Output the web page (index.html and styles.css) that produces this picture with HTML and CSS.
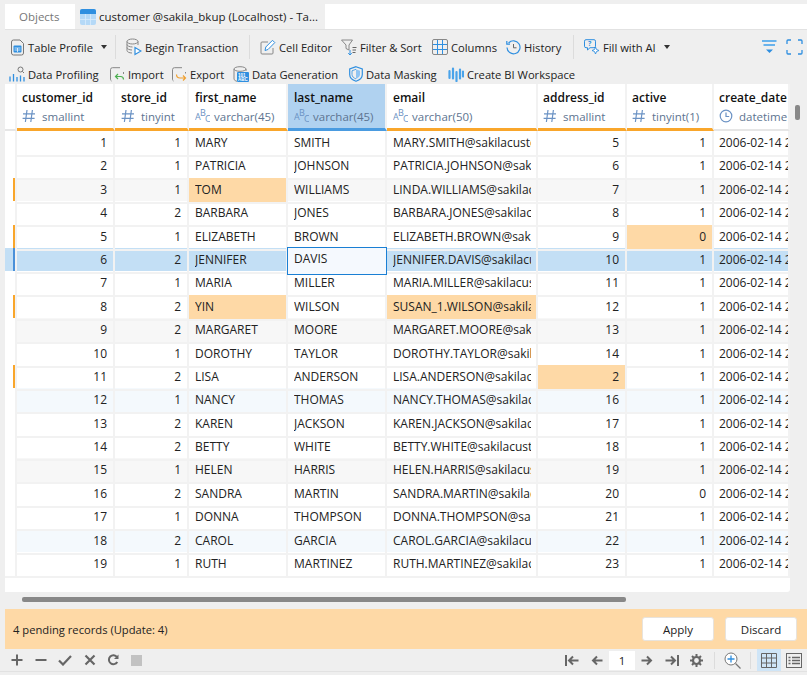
FILE: index.html
```html
<!DOCTYPE html>
<html lang="en">
<head>
    <meta charset="UTF-8">
    <title>customer @sakila_bkup (Localhost) - Table</title>
    <link rel="stylesheet" href="styles.css">
</head>
<body>

<svg class="defs" width="0" height="0">
    <symbol id="i-hash" viewBox="0 0 14 14"><path d="M5 1 3.400 13M10.400 1 8.800 13M1 4.800h12M.6 9.400h12" fill="none" stroke="#6b92c4" stroke-width="1.200"/></symbol>
    <symbol id="i-abc" viewBox="0 0 15 14"><text x="0" y="11" class="abc">A</text><text x="5" y="7" class="abc">B</text><text x="10" y="13" class="abc">C</text></symbol>
    <symbol id="i-clock" viewBox="0 0 14 14"><circle cx="7" cy="7" r="5.800" fill="none" stroke="#6b92c4" stroke-width="1.200"/><path d="M7 3.500V7.500H10.200" fill="none" stroke="#6b92c4" stroke-width="1.200"/></symbol>
</svg>

<div class="tabs">
    <div class="tab tab-objects">Objects</div>
    <div class="tab tab-active">
        <svg class="tab-icon" width="16" height="16" viewBox="0 0 16 16"><rect width="16" height="16" rx="2" fill="#b5d9f7"/><path d="M0 2a2 2 0 0 1 2-2h12a2 2 0 0 1 2 2v3H0z" fill="#2f8fe0"/><path d="M5.500 5v11M10.500 5v11M0 10.500h16" stroke="#d8ecfc" stroke-width=".8"/></svg>
        customer @sakila_bkup (Localhost) - Ta...
    </div>
    <div class="tab-rest"></div>
</div>

<div class="toolbar">
    <div class="tool-row">
        <div class="tool w-profile">
            <svg width="15" height="17" viewBox="0 0 15 17"><path d="M1.500 3A2 2 0 0 1 3.500 1H10l3.500 3.500V14a2 2 0 0 1-2 2h-8a2 2 0 0 1-2-2z" fill="none" stroke="#777"/><rect x="3.500" y="6.500" width="8" height="7" rx="1" fill="#2f8fe0"/><path d="M4.500 9h6M4.500 11h6M7.500 9v4" stroke="#fff" stroke-width=".7"/></svg>
            <span>Table Profile</span><i class="caret"></i>
        </div>
        <b class="sep"></b>
        <div class="tool w-begin">
            <svg width="16" height="18" viewBox="0 0 16 18"><g fill="none" stroke="#888"><ellipse cx="6.500" cy="3.500" rx="5.500" ry="2.500"/><path d="M1 3.500v9c0 1.300 2.200 2.500 5 2.500M12 3.500V7M1 6.500c0 1.300 2.500 2.500 5.500 2.500M1 9.500c0 1.300 2.200 2.500 5 2.500"/></g><path d="M9 9.500v7l6-3.500z" fill="#fff" stroke="#2f8fe0" stroke-width="1.200"/></svg>
            <span>Begin Transaction</span>
        </div>
        <b class="sep"></b>
        <div class="tool w-cell">
            <svg width="16" height="16" viewBox="0 0 16 16"><path d="M8 3H2a1 1 0 0 0-1 1v10a1 1 0 0 0 1 1h10a1 1 0 0 0 1-1V9" fill="none" stroke="#888"/><path d="M5 11.500 5.800 8 12.500 1.300l2.300 2.300L8 10.500z" fill="#fff" stroke="#2f8fe0"/></svg>
            <span>Cell Editor</span>
        </div>
        <div class="tool w-filter">
            <svg width="16" height="17" viewBox="0 0 16 17"><path d="M.5 1h11L8 6v5L5 9.500V6z" fill="none" stroke="#888"/><path d="M9 11v5M7.200 14.200 9 16l1.800-1.800" fill="none" stroke="#2f8fe0"/><path d="M11.500 8.500h4M11.500 11h3.500M11.500 13.500h3" stroke="#666"/></svg>
            <span>Filter &amp; Sort</span>
        </div>
        <div class="tool w-cols">
            <svg width="16" height="16" viewBox="0 0 16 16"><rect x=".5" y=".5" width="15" height="15" rx="1.500" fill="none" stroke="#888"/><path d="M5.500 1v14M10.500 1v14M1 5.500h14M1 10.500h14" stroke="#2f8fe0"/></svg>
            <span>Columns</span>
        </div>
        <div class="tool w-hist">
            <svg width="15" height="15" viewBox="0 0 15 15"><path d="M2.600 3A6.500 6.500 0 1 1 1 7.500" fill="none" stroke="#2f8fe0" stroke-width="1.200"/><path d="M.8 1v3.200H4" fill="none" stroke="#2f8fe0" stroke-width="1.200"/><path d="M7.500 4v3.800h3" fill="none" stroke="#666"/></svg>
            <span>History</span>
        </div>
        <b class="sep"></b>
        <div class="tool w-fill">
            <svg width="16" height="16" viewBox="0 0 16 16"><path d="M2 .7h8a1.500 1.500 0 0 1 1.500 1.500v5A1.500 1.500 0 0 1 10 8.700H6L3.500 11V8.700H2A1.500 1.500 0 0 1 .5 7.200v-5A1.500 1.500 0 0 1 2 .7z" fill="none" stroke="#2f8fe0"/><text x="4" y="7" class="ask">?</text><path d="M11.500 8l1 2.500 2.500 1-2.500 1-1 2.500-1-2.500-2.500-1 2.500-1z" fill="#fff" stroke="#2f8fe0" stroke-width=".9"/></svg>
            <span>Fill with AI</span><i class="caret"></i>
        </div>
        <div class="tool-end">
            <svg width="15" height="15" viewBox="0 0 15 15"><path d="M0 1h14.500M1.500 5h11.500" stroke="#3ea0ec" stroke-width="1.300"/><path d="M4 9.500h7L7.500 13z" fill="#2f8fe0"/></svg>
            <svg width="17" height="16" viewBox="0 0 17 16"><path d="M1 5V2a1 1 0 0 1 1-1h3M12 1h3a1 1 0 0 1 1 1v3M16 11v3a1 1 0 0 1-1 1h-3M5 15H2a1 1 0 0 1-1-1v-3" fill="none" stroke="#2f8fe0" stroke-width="1.300"/></svg>
        </div>
    </div>
    <div class="tool-row tool-row2">
        <div class="tool w-prof">
            <svg width="16" height="16" viewBox="0 0 16 16"><path d="M1 10.500v5M4.500 8v7.500M8 11v4.500M11.500 9.500v6M15 11v4.500" stroke="#2f8fe0" stroke-width="1.300" fill="none"/><circle cx="11.500" cy="3.500" r="2.500" fill="none" stroke="#777"/><path d="m13.300 5.300 1.700 1.700" stroke="#777"/></svg>
            <span>Data Profiling</span>
        </div>
        <div class="tool w-imp">
            <svg width="15" height="15" viewBox="0 0 15 15"><path d="M10 .7H2.500a2 2 0 0 0-2 2v9.600a2 2 0 0 0 1 1.700M13.500 5v2" fill="none" stroke="#888"/><path d="M13.500 12.500c0-2-1-3-3-3H5.500M8 7 5.500 9.500 8 12" fill="none" stroke="#4caf50" stroke-width="1.200"/></svg>
            <span>Import</span>
        </div>
        <div class="tool w-exp">
            <svg width="15" height="15" viewBox="0 0 15 15"><path d="M10 .7H2.500a2 2 0 0 0-2 2v9.600a2 2 0 0 0 1 1.700M13.500 5v1.500" fill="none" stroke="#888"/><path d="M4.500 7.500c0 3 1.500 3.500 3.500 3.500h5.500M11 8.500l2.500 2.500-2.500 2.500" fill="none" stroke="#f0a030" stroke-width="1.200"/></svg>
            <span>Export</span>
        </div>
        <div class="tool w-gen">
            <svg width="16" height="16" viewBox="0 0 16 16"><g fill="none" stroke="#888"><ellipse cx="7" cy="3" rx="6" ry="2.300"/><path d="M1 3v10c0 1 1.500 2 3 2.300M13 3v2"/></g><rect x="4" y="6" width="12" height="10" rx="1" fill="#2f8fe0"/><text x="5" y="10.700" class="gen">101</text><text x="5" y="15.200" class="gen">ABC</text></svg>
            <span>Data Generation</span>
        </div>
        <div class="tool w-mask">
            <svg width="14" height="16" viewBox="0 0 14 16"><path d="M7 .7 13.300 3v5.500c0 3.200-2.700 5.600-6.300 6.800C3.400 14.100.7 11.700.7 8.500V3z" fill="none" stroke="#2f8fe0" stroke-width="1.200"/><path d="M7 3.300 11 4.800v3.700c0 2-1.700 3.500-4 4.400z" fill="#8fc4f2"/><path d="M7 3.300 3 4.800v3.700c0 2 1.700 3.500 4 4.400" fill="none" stroke="#2f8fe0" stroke-width=".8"/></svg>
            <span>Data Masking</span>
        </div>
        <div class="tool w-bi">
            <svg width="16" height="16" viewBox="0 0 16 16"><path d="M1.500 5v7M5 2.500v10M8.500 6v9M12 3.500v9M15 5.500v5" stroke="#4aa3ea" stroke-width="2.200" stroke-linecap="round" fill="none"/></svg>
            <span>Create BI Workspace</span>
        </div>
    </div>
</div>

<div class="main">
    <div class="grid">
        <div class="row head">
            <div class="gutter"></div>
            <div class="hcell"><div class="hname">customer_id</div><div class="htype"><svg class="ticon"><use href="#i-hash"/></svg>smallint</div></div>
            <div class="hcell hpad"><div class="hname">store_id</div><div class="htype"><svg class="ticon"><use href="#i-hash"/></svg>tinyint</div></div>
            <div class="hcell hpad"><div class="hname">first_name</div><div class="htype abc-type"><svg class="ticon"><use href="#i-abc"/></svg>varchar(45)</div></div>
            <div class="hcell hpad hsel"><div class="hname">last_name</div><div class="htype abc-type"><svg class="ticon"><use href="#i-abc"/></svg>varchar(45)</div></div>
            <div class="hcell hpad"><div class="hname">email</div><div class="htype abc-type"><svg class="ticon"><use href="#i-abc"/></svg>varchar(50)</div></div>
            <div class="hcell"><div class="hname">address_id</div><div class="htype"><svg class="ticon"><use href="#i-hash"/></svg>smallint</div></div>
            <div class="hcell"><div class="hname">active</div><div class="htype"><svg class="ticon"><use href="#i-hash"/></svg>tinyint(1)</div></div>
            <div class="hcell hlast"><div class="hname">create_date</div><div class="htype"><svg class="ticon"><use href="#i-clock"/></svg>datetime</div></div>
        </div>

        <div class="row"><div class="gutter"></div><div class="num">1</div><div class="num">1</div><div class="txt">MARY</div><div class="txt">SMITH</div><div class="txt">MARY.SMITH@sakilacustomer.org</div><div class="num">5</div><div class="num">1</div><div class="date">2006-02-14 22:04:36</div></div>
        <div class="row"><div class="gutter"></div><div class="num">2</div><div class="num">1</div><div class="txt">PATRICIA</div><div class="txt">JOHNSON</div><div class="txt">PATRICIA.JOHNSON@sakilacustomer.org</div><div class="num">6</div><div class="num">1</div><div class="date">2006-02-14 22:04:36</div></div>
        <div class="row stripe"><div class="gutter mark"></div><div class="num">3</div><div class="num">1</div><div class="txt pending">TOM</div><div class="txt">WILLIAMS</div><div class="txt">LINDA.WILLIAMS@sakilacustomer.org</div><div class="num">7</div><div class="num">1</div><div class="date">2006-02-14 22:04:36</div></div>
        <div class="row"><div class="gutter"></div><div class="num">4</div><div class="num">2</div><div class="txt">BARBARA</div><div class="txt">JONES</div><div class="txt">BARBARA.JONES@sakilacustomer.org</div><div class="num">8</div><div class="num">1</div><div class="date">2006-02-14 22:04:36</div></div>
        <div class="row"><div class="gutter mark"></div><div class="num">5</div><div class="num">1</div><div class="txt">ELIZABETH</div><div class="txt">BROWN</div><div class="txt">ELIZABETH.BROWN@sakilacustomer.org</div><div class="num">9</div><div class="num pending">0</div><div class="date">2006-02-14 22:04:36</div></div>
        <div class="row selected"><div class="gutter mark"></div><div class="num">6</div><div class="num">2</div><div class="txt">JENNIFER</div><div class="txt current">DAVIS</div><div class="txt">JENNIFER.DAVIS@sakilacustomer.org</div><div class="num">10</div><div class="num">1</div><div class="date">2006-02-14 22:04:36</div></div>
        <div class="row"><div class="gutter"></div><div class="num">7</div><div class="num">1</div><div class="txt">MARIA</div><div class="txt">MILLER</div><div class="txt">MARIA.MILLER@sakilacustomer.org</div><div class="num">11</div><div class="num">1</div><div class="date">2006-02-14 22:04:36</div></div>
        <div class="row"><div class="gutter mark"></div><div class="num">8</div><div class="num">2</div><div class="txt pending">YIN</div><div class="txt">WILSON</div><div class="txt pending">SUSAN_1.WILSON@sakilacustomer.org</div><div class="num">12</div><div class="num">1</div><div class="date">2006-02-14 22:04:36</div></div>
        <div class="row stripe"><div class="gutter"></div><div class="num">9</div><div class="num">2</div><div class="txt">MARGARET</div><div class="txt">MOORE</div><div class="txt">MARGARET.MOORE@sakilacustomer.org</div><div class="num">13</div><div class="num">1</div><div class="date">2006-02-14 22:04:36</div></div>
        <div class="row"><div class="gutter"></div><div class="num">10</div><div class="num">1</div><div class="txt">DOROTHY</div><div class="txt">TAYLOR</div><div class="txt">DOROTHY.TAYLOR@sakilacustomer.org</div><div class="num">14</div><div class="num">1</div><div class="date">2006-02-14 22:04:36</div></div>
        <div class="row"><div class="gutter mark"></div><div class="num">11</div><div class="num">2</div><div class="txt">LISA</div><div class="txt">ANDERSON</div><div class="txt">LISA.ANDERSON@sakilacustomer.org</div><div class="num pending">2</div><div class="num">1</div><div class="date">2006-02-14 22:04:36</div></div>
        <div class="row tint"><div class="gutter"></div><div class="num">12</div><div class="num">1</div><div class="txt">NANCY</div><div class="txt">THOMAS</div><div class="txt">NANCY.THOMAS@sakilacustomer.org</div><div class="num">16</div><div class="num">1</div><div class="date">2006-02-14 22:04:36</div></div>
        <div class="row"><div class="gutter"></div><div class="num">13</div><div class="num">2</div><div class="txt">KAREN</div><div class="txt">JACKSON</div><div class="txt">KAREN.JACKSON@sakilacustomer.org</div><div class="num">17</div><div class="num">1</div><div class="date">2006-02-14 22:04:36</div></div>
        <div class="row"><div class="gutter"></div><div class="num">14</div><div class="num">2</div><div class="txt">BETTY</div><div class="txt">WHITE</div><div class="txt">BETTY.WHITE@sakilacustomer.org</div><div class="num">18</div><div class="num">1</div><div class="date">2006-02-14 22:04:36</div></div>
        <div class="row stripe"><div class="gutter"></div><div class="num">15</div><div class="num">1</div><div class="txt">HELEN</div><div class="txt">HARRIS</div><div class="txt">HELEN.HARRIS@sakilacustomer.org</div><div class="num">19</div><div class="num">1</div><div class="date">2006-02-14 22:04:36</div></div>
        <div class="row"><div class="gutter"></div><div class="num">16</div><div class="num">2</div><div class="txt">SANDRA</div><div class="txt">MARTIN</div><div class="txt">SANDRA.MARTIN@sakilacustomer.org</div><div class="num">20</div><div class="num">0</div><div class="date">2006-02-14 22:04:36</div></div>
        <div class="row"><div class="gutter"></div><div class="num">17</div><div class="num">1</div><div class="txt">DONNA</div><div class="txt">THOMPSON</div><div class="txt">DONNA.THOMPSON@sakilacustomer.org</div><div class="num">21</div><div class="num">1</div><div class="date">2006-02-14 22:04:36</div></div>
        <div class="row tint"><div class="gutter"></div><div class="num">18</div><div class="num">2</div><div class="txt">CAROL</div><div class="txt">GARCIA</div><div class="txt">CAROL.GARCIA@sakilacustomer.org</div><div class="num">22</div><div class="num">1</div><div class="date">2006-02-14 22:04:36</div></div>
        <div class="row"><div class="gutter"></div><div class="num">19</div><div class="num">1</div><div class="txt">RUTH</div><div class="txt">MARTINEZ</div><div class="txt">RUTH.MARTINEZ@sakilacustomer.org</div><div class="num">23</div><div class="num">1</div><div class="date">2006-02-14 22:04:36</div></div>
    </div>
    <div class="vscroll"><div class="vthumb"></div></div>
</div>

<div class="hscroll"><div class="hthumb"></div></div>

<div class="pending-bar">
    <span class="pending-text">4 pending records (Update: 4)</span>
    <button class="btn">Apply</button>
    <button class="btn">Discard</button>
</div>

<div class="bottom">
    <div class="bottom-left">
        <svg width="12" height="12" viewBox="0 0 12 12"><path d="M6 .5v11M.5 6h11" stroke="#666" stroke-width="2"/></svg>
        <svg width="12" height="12" viewBox="0 0 12 12"><path d="M.5 6h11" stroke="#666" stroke-width="2"/></svg>
        <svg width="14" height="12" viewBox="0 0 14 12"><path d="m1 6.500 4 4 8-8.500" fill="none" stroke="#666" stroke-width="2.200"/></svg>
        <svg width="12" height="12" viewBox="0 0 12 12"><path d="m1.500 1.500 9 9M10.500 1.500l-9 9" stroke="#666" stroke-width="2.200"/></svg>
        <svg width="12" height="12" viewBox="0 0 12 12"><path d="M10.300 8A4.500 4.500 0 1 1 10 3" fill="none" stroke="#666" stroke-width="2"/><path d="M11.500.5V5H7z" fill="#666"/></svg>
        <i class="stop"></i>
    </div>
    <div class="bottom-right">
        <svg width="14" height="11" viewBox="0 0 14 11"><path d="M1 0v11M13.500 5.500H4M8 1.500 4 5.500l4 4" fill="none" stroke="#666" stroke-width="2"/></svg>
        <svg class="far" width="12" height="11" viewBox="0 0 12 11"><path d="M11.500 5.500H2M6 1.500 2 5.500l4 4" fill="none" stroke="#666" stroke-width="2"/></svg>
        <div class="page">1</div>
        <svg width="12" height="11" viewBox="0 0 12 11"><path d="M.5 5.500H10M6 1.500l4 4-4 4" fill="none" stroke="#666" stroke-width="2"/></svg>
        <svg class="far" width="14" height="11" viewBox="0 0 14 11"><path d="M13 0v11M.5 5.500H10M6 1.500l4 4-4 4" fill="none" stroke="#666" stroke-width="2"/></svg>
        <svg class="far-s" width="13" height="13" viewBox="0 0 13 13"><circle cx="6.500" cy="6.500" r="3.500" fill="none" stroke="#666" stroke-width="2.200"/><path d="M6.500 0v2.500M6.500 10.500V13M0 6.500h2.500M10.500 6.500H13M2 2l1.700 1.700M9.300 9.300 11 11M11 2 9.300 3.700M3.700 9.300 2 11" stroke="#666" stroke-width="2"/></svg>
        <b class="sep sep-b far-s"></b>
        <svg class="near" width="17" height="17" viewBox="0 0 17 17"><circle cx="7" cy="7" r="6" fill="#fff" stroke="#777"/><path d="M7 3.500v7M3.500 7h7" stroke="#2f8fe0" stroke-width="1.300"/><path d="m11.500 11.500 5 5" stroke="#777" stroke-width="1.200"/></svg>
        <b class="sep sep-b near"></b>
        <div class="view-on"><svg width="16" height="15" viewBox="0 0 16 15"><path d="M.5.500h15v14H.5zM.5 5h15M.5 10h15M5.500.500v14M10.500.500v14" fill="none" stroke="#666"/></svg></div>
        <svg class="view-alt" width="16" height="15" viewBox="0 0 16 15"><rect x=".5" y=".5" width="15" height="14" fill="none" stroke="#666"/><path d="M2.500 4.500h2M6 4.500h8M2.500 7.500h2M6 7.500h8M2.500 10.500h2M6 10.500h8" stroke="#666" stroke-width="1.400"/></svg>
    </div>
</div>

</body>
</html>
```

FILE: styles.css
```css
* {
    box-sizing: border-box;
}
body {
    margin: 0;
    height: 675px;
    overflow: hidden;
    background-color: #efefef;
    font-family: "Open Sans", "Noto Sans", sans-serif;
    font-size: 11.5px;
    color: #222;
    display: flex;
    flex-direction: column;
}
.defs {
    position: absolute;
}
svg {
    display: block;
    flex: none;
}
.abc {
    font: 9px "Open Sans", sans-serif;
    fill: #6b92c4;
}
.ask {
    font: bold 7px "Open Sans", sans-serif;
    fill: #2f8fe0;
}
.gen {
    font: bold 4.500px "Liberation Sans", sans-serif;
    fill: #fff;
}

/* tabs */
.tabs {
    display: flex;
    height: 26px;
    margin: 4px 0 0 5px;
    border-bottom: 1px solid #e2e2e2;
    flex: none;
}
.tab {
    display: flex;
    align-items: center;
}
.tab-objects {
    width: 70px;
    padding-left: 14px;
    background: #fff;
    color: #777;
}
.tab-active {
    width: 250px;
    padding-left: 5px;
    gap: 3px;
}
.tab-icon {
    margin-top: 1px;
}
.tab-rest {
    flex: 1;
    background: #fff;
}

/* toolbar */
.toolbar {
    height: 54px;
    font-size: 11.2px;
    flex: none;
}
.tool-row {
    display: flex;
    align-items: center;
    height: 34px;
    padding-left: 10px;
}
.tool-row2 {
    height: 20px;
    padding-left: 9px;
}
.tool {
    display: flex;
    align-items: center;
    gap: 3px;
    white-space: nowrap;
}
.caret {
    width: 0;
    height: 0;
    margin-left: 5px;
    border: 3px solid transparent;
    border-top: 4px solid #333;
    border-bottom: 0;
}
.sep {
    display: block;
    width: 1px;
    height: 24px;
    margin: 0 10px;
    background: #dcdcdc;
}
.w-profile { width: 95px; }
.w-begin { width: 113px; }
.w-cell { width: 81px; }
.w-filter { width: 91px; }
.w-cols { width: 74px; }
.w-hist { width: 57px; }
.w-fill { width: 86px; }
.w-prof { width: 101px; }
.w-imp { width: 62px; }
.w-exp { width: 61px; }
.w-gen { width: 116px; }
.w-mask { width: 99px; }
.w-bi { width: 130px; }
.tool-end {
    display: flex;
    align-items: center;
    gap: 9px;
    margin-left: auto;
    padding-right: 4px;
}

/* grid */
.main {
    display: flex;
    height: 508px;
    flex: none;
    padding-left: 5px;
}
.grid {
    width: 785px;
    background: #fff;
    border-radius: 0 0 3px 0;
    font-size: 12px;
}
.row {
    display: grid;
    grid-template-columns: 12px 98px 74px 99px 99px 151px 89px 87px 76px;
    height: 23.4px;
    line-height: 24px;
}
.row > div {
    border-right: 2px solid #f2f2f2;
    border-bottom: 2px solid #f2f2f2;
    white-space: nowrap;
}
.row.head {
    height: 47px;
    line-height: normal;
}
.gutter {
    background: #fff;
}
.row.head .gutter {
    border-bottom-color: #e6e6e6;
}
.mark {
    box-shadow: inset -2px 0 #f9a62b;
}
.num {
    padding-right: 6px;
    text-align: right;
    overflow: hidden;
}
.txt {
    padding: 0 5px 0 6px;
    overflow: clip;
    overflow-clip-margin: content-box;
}
.date {
    padding-left: 5px;
    overflow: hidden;
}
.stripe {
    background: #f7f7f7;
}
.tint {
    background: #f4f9fd;
}
.selected {
    background: #c3dff5;
}
.selected .mark {
    background: #c3dff5;
    box-shadow: inset -2px 0 #4a90d9;
}
.row > .pending {
    background: #fed9a6;
}
.row > .current {
    position: relative;
    line-height: 23px;
    background: #f5f9fe;
    outline: 1px solid #1a7fd4;
    outline-offset: -1px;
    margin: -1px 0 -1px -1px;
    padding-left: 7px;
    border: 0;
    width: 100px;
}
.hcell {
    padding: 5px 0 0 5px;
    border-bottom: 3px solid #f9a62b !important;
    overflow: hidden;
}
.hpad {
    padding-left: 6px;
}
.hsel {
    background: #b0d2f0;
    border-bottom-color: #4a9be0 !important;
}
.hlast {
    border-bottom: 2px solid #e6e6e6 !important;
}
.hname {
    font-weight: 600;
    color: #111;
    height: 18px;
}
.htype {
    display: flex;
    align-items: center;
    gap: 6px;
    height: 20px;
    margin-top: -1px;
    font-size: 11.5px;
    color: #5d7490;
}
.abc-type {
    gap: 4px;
}
.ticon {
    width: 14px;
    height: 14px;
}
.abc-type .ticon {
    width: 15px;
}
.vscroll {
    flex: 1;
    padding: 21px 0 0 5px;
}
.vthumb {
    width: 5px;
    height: 15px;
    border-radius: 2px;
    background: #888;
}
.hscroll {
    height: 17px;
    padding: 5px 0 0 22px;
    flex: none;
}
.hthumb {
    width: 604px;
    height: 5px;
    border-radius: 2px;
    background: #888;
}

/* pending bar */
.pending-bar {
    display: flex;
    align-items: center;
    gap: 11px;
    height: 40px;
    margin-left: 5px;
    padding-right: 10px;
    background: #fed9a6;
    flex: none;
}
.pending-text {
    margin-left: 8px;
    margin-right: auto;
    font-size: 11.2px;
}
.btn {
    width: 72px;
    height: 24px;
    border: 1px solid #e8e3dc;
    border-radius: 3px;
    background: #fff;
    font: inherit;
    color: #222;
}

/* bottom bar */
.bottom {
    display: flex;
    justify-content: space-between;
    align-items: center;
    height: 23px;
    padding: 0 5px 0 11px;
    border-bottom: 1px solid #e2e2e2;
    flex: none;
}
.bottom-left {
    display: flex;
    align-items: center;
    gap: 11.5px;
}
.stop {
    display: block;
    width: 11px;
    height: 11px;
    background: #c2c2c2;
}
.bottom-right {
    display: flex;
    align-items: center;
    gap: 6px;
}
.far {
    margin-left: 6px;
}
.far-s {
    margin-left: 5px;
}
.near {
    margin-left: 3px;
}
.page {
    width: 26px;
    height: 19px;
    background: #fff;
    text-align: center;
    line-height: 20px;
}
.bottom-right .sep-b {
    height: 17px;
    margin-right: 0;
}
.bottom-right .far-s.sep-b {
    margin-left: 5px;
}
.bottom-right .near.sep-b {
    margin-left: 3px;
}
.view-on {
    width: 24px;
    height: 22px;
    padding: 4px;
    background: #cfe5f7;
}
.view-alt {
    margin-left: -1px;
}
```
